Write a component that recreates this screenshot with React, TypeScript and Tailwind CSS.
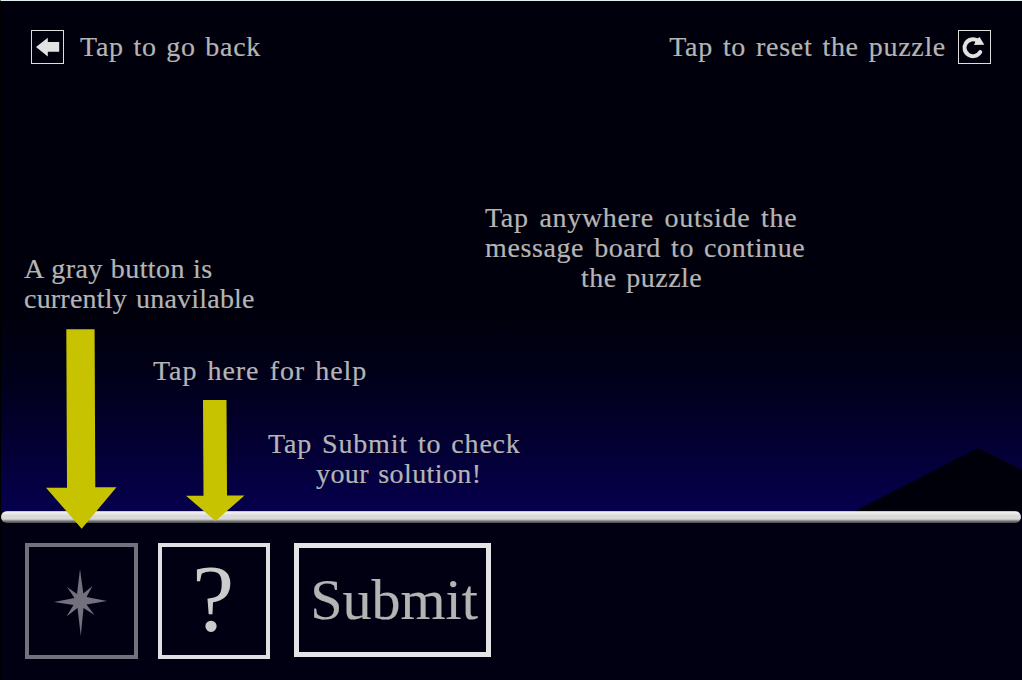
import type { ReactNode } from "react";

const hint =
  "whitespace-nowrap font-['Liberation_Serif',serif] text-[28px] leading-[30px] text-[#b5b5b5] [-webkit-text-stroke:0.2px_#b5b5b5]";

function Header() {
  return (
    <header className={`flex h-[63px] items-end justify-between pr-[31px] pl-[30px] ${hint}`}>
      <div className="flex items-end gap-[16px]">
        <button className="h-[34px] w-[33px] border border-[#dedede]" aria-label="Back">
          <svg className="block" width="31" height="32" viewBox="0 0 31 32">
            <path d="M4 16L15.8 6.8V11H27.2V20.8H15.8V25.4Z" fill="#e2e2e2" />
          </svg>
        </button>
        <span className="mb-[2px] tracking-[0.75px] [word-spacing:1.8px]">Tap to go back</span>
      </div>
      <div className="flex items-end gap-[12px]">
        <span className="mb-[2px] tracking-[0.7px] [word-spacing:2.3px]">Tap to reset the puzzle</span>
        <button className="h-[34px] w-[33px] border border-[#dedede]" aria-label="Reset">
          <svg className="block" width="31" height="32" viewBox="0 0 31 32">
            <path
              d="M18.8 9.9A8.4 8.4 0 1 0 21.2 21"
              fill="none"
              stroke="#e2e2e2"
              strokeWidth="4"
              strokeLinecap="round"
            />
            <path d="M20.6 6L25.3 13.8L15 14L17.5 8Z" fill="#e2e2e2" />
          </svg>
        </button>
      </div>
    </header>
  );
}

function Column({ className, children }: { className: string; children: ReactNode }) {
  return <div className={`flex flex-none flex-col items-start ${hint} ${className}`}>{children}</div>;
}

export default function App() {
  return (
    <main className="h-[680px] w-[1022px] overflow-hidden border-t border-l border-t-[#e4f0f0] border-l-black bg-[#000012]">
      <section className="relative z-10 h-[510px] bg-[linear-gradient(to_bottom,#00000c_0%,#00000d_62%,#010019_73%,#03002d_84%,#06004d_100%)]">
        <svg className="absolute right-0 bottom-0" width="167" height="63" viewBox="0 0 167 63">
          <path d="M0 63L123 0L167 22V63Z" fill="#00000b" />
        </svg>
        <div className="relative">
          <Header />
          <div className="flex items-start pl-[23px]">
            <Column className="w-[129px] pt-[190px]">
              <span className="tracking-[0.4px] [word-spacing:0.8px]">A gray button is</span>
              <span className="tracking-[0.2px] [word-spacing:2px]">currently unavilable</span>
              <svg className="mt-[15px] ml-[22px] flex-none" width="71" height="201" viewBox="0 0 71 201">
                <path
                  d="M20.3 0.3H48.6L49.3 158.2H70.5L35.7 199.7L0 158.7H21Z"
                  fill="#c8c300"
                />
              </svg>
            </Column>
            <Column className="w-[115px] pt-[292px]">
              <span className="tracking-[0.9px] [word-spacing:2.4px]">Tap here for help</span>
              <svg className="mt-[13px] ml-[33px] flex-none" width="59" height="123" viewBox="0 0 59 123">
                <path d="M17 1H40.5L41 96.5H58.5L29.5 122L0 96.8H17.5Z" fill="#c8c300" />
              </svg>
            </Column>
            <Column className="w-[217px] pt-[365px]">
              <span className="tracking-[0.8px] [word-spacing:2.3px]">Tap Submit to check</span>
              <span className="ml-[48px] tracking-[0.4px] [word-spacing:2px]">your solution!</span>
            </Column>
            <Column className="w-[322px] pt-[139px]">
              <span className="tracking-[0.7px] [word-spacing:3px]">Tap anywhere outside the</span>
              <span className="tracking-[0.6px] [word-spacing:2.5px]">message board to continue</span>
              <span className="ml-[96px] tracking-[0.5px] [word-spacing:2px]">the puzzle</span>
            </Column>
          </div>
        </div>
      </section>
      <div className="h-[12px] w-[1020px] rounded-full bg-[linear-gradient(to_bottom,#a6a6ae_0px,#f0f0f0_1px,#e8e8e8_3px,#dadada_4px,#d8d8d8_8px,#b0b0b0_9px,#777777_10px,#4c4c4c_12px)]" />
      <nav className="flex items-start pt-[20px] pl-[24px] font-['Liberation_Serif',serif]">
        <button className="flex h-[116px] w-[113px] items-center justify-center border-4 border-[#72717d]" aria-label="Star">
          <svg width="54" height="68" viewBox="0 0 54 68" className="mt-[3px] mr-[2px]">
            <path
              d="M26 0L29.3 24.5L38.5 17L32.5 28L53 32L32.5 35.5L40.5 46L29.5 39L26.8 67L23.5 39L12.5 47.5L19.5 36L0 33L20.5 29L13 18L23 25Z"
              fill="#72717d"
            />
          </svg>
        </button>
        <button className="ml-[20px] flex h-[116px] w-[112px] items-center justify-center border-4 border-[#e0dfe4] pr-[2px] pb-[3px] text-[95px] leading-[105px] text-[#cbcbcb]">
          ?
        </button>
        <button className="ml-[24px] flex h-[114px] w-[197px] items-center justify-center border-[5px] border-[#e4e3e5] pb-px pl-[3px] text-[58px] leading-[102px] text-[#b4b4b4] [-webkit-text-stroke:0.2px_#b4b4b4]">
          Submit
        </button>
      </nav>
    </main>
  );
}
